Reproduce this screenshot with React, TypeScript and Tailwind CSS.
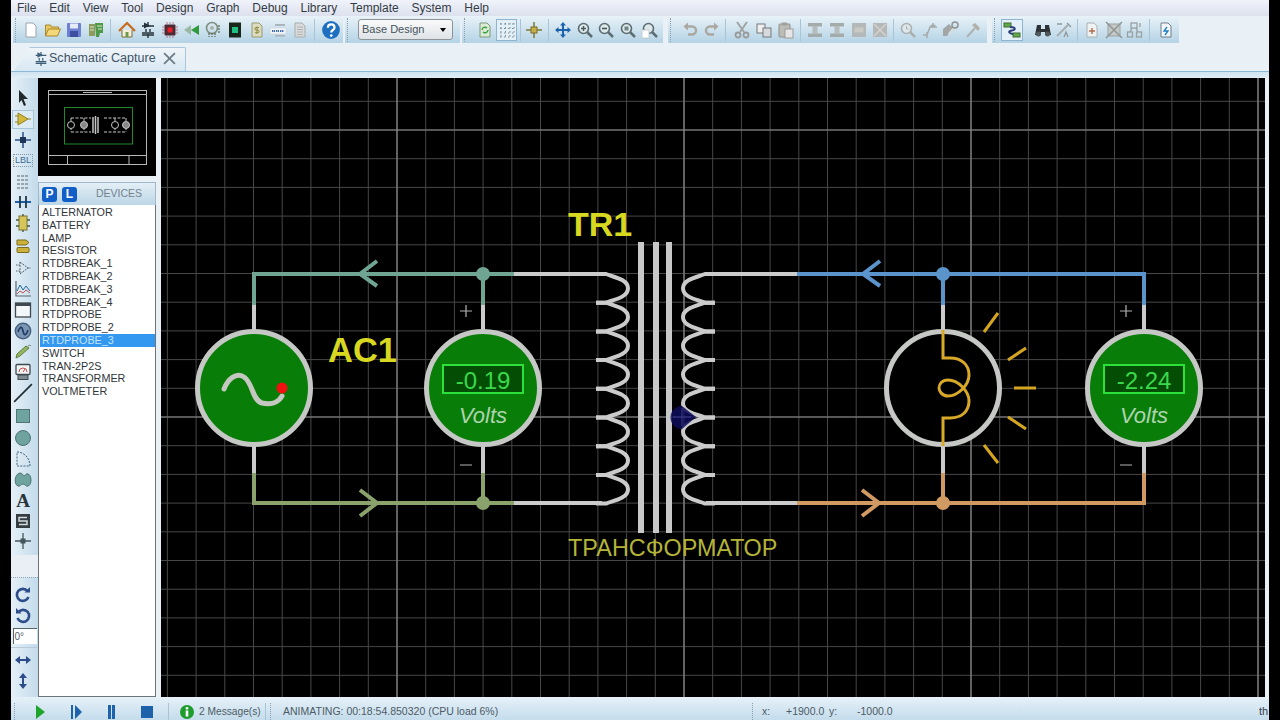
import { ReactNode } from 'react'

const menus = ['File', 'Edit', 'View', 'Tool', 'Design', 'Graph', 'Debug', 'Library', 'Template', 'System', 'Help']
const devices = ['ALTERNATOR', 'BATTERY', 'LAMP', 'RESISTOR', 'RTDBREAK_1', 'RTDBREAK_2', 'RTDBREAK_3', 'RTDBREAK_4', 'RTDPROBE', 'RTDPROBE_2', 'RTDPROBE_3', 'SWITCH', 'TRAN-2P2S', 'TRANSFORMER', 'VOLTMETER']

const Ico = ({ children, size = 18 }: { children: ReactNode; size?: number }) => (
  <svg viewBox="0 0 18 18" width={size} height={size}>
    {children}
  </svg>
)

const Cell = ({ children, active }: { children: ReactNode; active?: boolean }) => (
  <div className={`flex h-[22px] w-[21.7px] shrink-0 items-center justify-center ${active ? 'border border-[#8fb4d0] bg-[#e4f0f8]' : ''}`}>
    {children}
  </div>
)

const Sep = ({ l = 3, r = 5 }: { l?: number; r?: number }) => (
  <div className="h-[22px] w-px shrink-0 bg-[#a9c4d6]" style={{ marginLeft: l, marginRight: r }} />
)

const Grip = () => <div className="ml-[2px] h-[24px] w-0 shrink-0 border-l border-dotted border-[#8aa0b0]" />

const Doc = ({ fill = '#fff', stroke = '#9aa4ac', children }: { fill?: string; stroke?: string; children?: ReactNode }) => (
  <Ico>
    <path d="M4 2h7l3 3v11H4z" fill={fill} stroke={stroke} />
    {children}
  </Ico>
)

const Magnifier = ({ sign, color = '#5c6e72' }: { sign?: ReactNode; color?: string }) => (
  <Ico>
    <path d="M11 11l5 5" stroke={color} strokeWidth="2.5" />
    <circle cx="7.5" cy="7.5" r="5" fill="#dfe8ea" stroke={color} strokeWidth="1.6" />
    {sign}
  </Ico>
)

const GreyBlock = () => (
  <Ico>
    <rect x="2" y="2" width="14" height="3.5" fill="#a3abab" />
    <rect x="2" y="12.5" width="14" height="3.5" fill="#a3abab" />
    <rect x="6.5" y="5" width="5" height="8" fill="#b6bcbc" />
  </Ico>
)

const GreyBox = ({ cross }: { cross?: boolean }) => (
  <Ico>
    <rect x="2" y="2" width="14" height="14" fill="#b4b8b8" />
    {cross ? <path d="M3 3l12 12M15 3L3 15" stroke="#d6d2cc" strokeWidth="1.5" /> : <rect x="4.5" y="6.5" width="9" height="5" fill="#c9c9c6" />}
  </Ico>
)

const Toolbars = () => (
  <div className="flex h-[28px] items-start bg-[#e9f0f6] pl-[2px]">
    <div className="flex h-[27px] w-[330px] items-center bg-gradient-to-b from-[#e8f2f8] to-[#b4d3e5]">
      <Grip />
      <div className="w-[4px]" />
      <Cell><Doc /></Cell>
      <Cell>
        <Ico>
          <path d="M1.5 15V4h5l1 2h7v2" fill="#e8c860" stroke="#a8882c" />
          <path d="M1.5 15l3-7h12l-3 7z" fill="#f3d77a" stroke="#a8882c" />
        </Ico>
      </Cell>
      <Cell>
        <Ico>
          <rect x="2" y="2" width="14" height="14" rx="1" fill="#6c7fd2" />
          <rect x="5" y="2.5" width="8" height="5" fill="#e6eaf8" />
          <rect x="5" y="10" width="8" height="6" fill="#3f4f9f" />
        </Ico>
      </Cell>
      <Cell>
        <Ico>
          <path d="M2 3h6v12H2z" fill="#8c9a5a" />
          <path d="M8 2h8v10h-3l-1 4H9z" fill="#4f9a4a" />
          <path d="M3 6h4M3 9h4M10 5h5M11 8h4" stroke="#dce6c4" />
        </Ico>
      </Cell>
      <Sep />
      <Cell>
        <Ico>
          <path d="M4 9v7h10V9" fill="#f6f0d8" stroke="#7a6a3a" />
          <path d="M1 10l8-8 8 8" fill="none" stroke="#c66a1c" strokeWidth="2.2" />
          <rect x="7.5" y="11" width="3" height="5" fill="#6c9c4a" />
        </Ico>
      </Cell>
      <Cell>
        <Ico>
          <path d="M9 1v5M3 5h12M9 13v4M3 12h12M3 14h12" stroke="#26323a" strokeWidth="1.4" />
          <path d="M5 1.5l6 3-6 3z" fill="#26323a" />
          <path d="M7 8v3M11 8v3" stroke="#26323a" strokeWidth="1.4" />
        </Ico>
      </Cell>
      <Cell>
        <Ico>
          <rect x="3.5" y="3.5" width="11" height="11" rx="1" fill="#4c2a34" />
          <rect x="6.5" y="6.5" width="5" height="5" fill="#e8202c" />
          <path d="M1 6h2M1 9h2M1 12h2M15 6h2M15 9h2M15 12h2M6 1v2M9 1v2M12 1v2M6 15v2M9 15v2M12 15v2" stroke="#b47a84" />
        </Ico>
      </Cell>
      <Cell>
        <Ico>
          <path d="M8 4v10L1 9z" fill="#9cb8a0" />
          <path d="M16 4v10L8 9z" fill="#2f9a3c" />
        </Ico>
      </Cell>
      <Cell>
        <Ico>
          <circle cx="8" cy="7" r="5.5" fill="none" stroke="#7e8e7e" strokeWidth="1.6" />
          <path d="M5 12v4M8 12v4M11 12v4M15 4v9" stroke="#68766a" strokeWidth="1.4" strokeDasharray="2 1" />
          <circle cx="8" cy="7" r="2" fill="#a8b4a8" />
        </Ico>
      </Cell>
      <Cell>
        <Ico>
          <rect x="3" y="1.5" width="12" height="15" fill="#18261c" />
          <rect x="6" y="6" width="6" height="6" fill="#1fc080" />
        </Ico>
      </Cell>
      <Cell>
        <Doc fill="#dcdcc0" stroke="#9a9a70">
          <path d="M11 6.5H8.2a1.2 1.2 0 0 0 0 2.6h1.6a1.2 1.2 0 0 1 0 2.6H7M9 5.5v7.5" fill="none" stroke="#8c8a3c" />
        </Doc>
      </Cell>
      <Cell>
        <Ico>
          <rect x="6" y="3" width="10" height="2" fill="#a9b4bc" />
          <rect x="1" y="7" width="16" height="6" fill="#f2f4f6" stroke="#c3ccd2" strokeWidth="0.5" />
          <path d="M3 10h3M7 10h3M11 10h4" stroke="#3c6ab0" strokeWidth="2" strokeDasharray="1.2 .6" />
          <rect x="6" y="14" width="10" height="1.6" fill="#a9b4bc" />
        </Ico>
      </Cell>
      <Cell>
        <Doc fill="#d9dcda" stroke="#a7acac">
          <path d="M6 6h6M6 8.5h6M6 11h6M6 13.5h6" stroke="#aeb2b0" />
        </Doc>
      </Cell>
      <Sep />
      <Cell>
        <Ico size={20}>
          <circle cx="9" cy="9" r="8" fill="#1f6fc0" />
          <path d="M6.2 7c0-4 6-4 6 0 0 2-3 2-3 4.2" fill="none" stroke="#fff" strokeWidth="2" />
          <circle cx="9.2" cy="14" r="1.2" fill="#fff" />
        </Ico>
      </Cell>
    </div>
    <div className="ml-[2px] flex h-[27px] w-[115px] items-center bg-gradient-to-b from-[#e8f2f8] to-[#b4d3e5]">
      <Grip />
      <div className="ml-[10px] flex h-[21px] w-[95px] items-center justify-between rounded-[3px] border border-[#8c9499] bg-gradient-to-b from-[#fafafa] to-[#dfe3e6] pl-[3px] pr-[6px] text-[11px] text-[#45535c]">
        <span>Base Design</span>
        <span className="h-0 w-0 border-x-[3.5px] border-t-[4px] border-x-transparent border-t-black" />
      </div>
    </div>
    <div className="ml-[2px] flex h-[27px] w-[201px] items-center bg-gradient-to-b from-[#e8f2f8] to-[#b4d3e5]">
      <Grip />
      <div className="w-[9px]" />
      <Cell>
        <Doc fill="#dcead4" stroke="#7c9a78">
          <path d="M6 9a3 3 0 0 1 5-2M12 9a3 3 0 0 1-5 2" fill="none" stroke="#38a044" strokeWidth="1.4" />
        </Doc>
      </Cell>
      <Cell active>
        <Ico>
          <path d="M2 3h14M2 7.5h14M2 12h14M2 16h14M3 2v14M7.5 2v14M12 2v14M16 2v14" stroke="#5f7482" strokeWidth="0.8" strokeDasharray="1.5 2.5" />
        </Ico>
      </Cell>
      <Sep l={3} r={2} />
      <Cell>
        <Ico>
          <path d="M9 1v16M1 9h16" stroke="#7a7a3c" strokeWidth="1.5" />
          <rect x="6" y="6" width="6" height="6" fill="#c4b04a" stroke="#7c6a24" />
        </Ico>
      </Cell>
      <Sep l={3} r={3} />
      <Cell>
        <Ico>
          <path d="M9 1l3 3.5h-2V8h3.5V6l3.5 3-3.5 3v-2H10v3.5h2L9 17l-3-3.5h2V10H4.5v2L1 9l3.5-3v2H8V4.5H6z" fill="#1e62ac" />
        </Ico>
      </Cell>
      <Cell><Magnifier sign={<path d="M5 7.5h5M7.5 5v5" stroke="#45585c" strokeWidth="1.4" />} /></Cell>
      <Cell><Magnifier sign={<path d="M5 7.5h5" stroke="#45585c" strokeWidth="1.6" />} /></Cell>
      <Cell><Magnifier sign={<rect x="5.5" y="5.5" width="4" height="4" fill="#72868a" />} /></Cell>
      <Cell>
        <Magnifier sign={<rect x="1" y="9" width="7" height="8" fill="#fff" stroke="#b8c0c4" strokeWidth="0.7" />} />
      </Cell>
    </div>
    <div className="ml-[5px] flex h-[27px] w-[319px] items-center bg-gradient-to-b from-[#e8f2f8] to-[#b4d3e5]">
      <Grip />
      <div className="w-[8px]" />
      <Cell>
        <Ico>
          <path d="M4 5.5h7a4 4 0 0 1 0 8H7" fill="none" stroke="#aaa8a0" strokeWidth="2.4" />
          <path d="M7 1.5L2.5 5.5 7 9.5z" fill="#aaa8a0" />
        </Ico>
      </Cell>
      <Cell>
        <Ico>
          <path d="M14 5.5H7a4 4 0 0 0 0 8h4" fill="none" stroke="#aaa8a0" strokeWidth="2.4" />
          <path d="M11 1.5l4.5 4-4.5 4z" fill="#aaa8a0" />
        </Ico>
      </Cell>
      <Sep l={3} r={5} />
      <Cell>
        <Ico>
          <path d="M4 1l7 10M14 1L7 11" stroke="#a0a4a4" strokeWidth="2" />
          <circle cx="5" cy="14" r="2.5" fill="none" stroke="#9a9a9a" strokeWidth="1.8" />
          <circle cx="13" cy="14" r="2.5" fill="none" stroke="#9a9a9a" strokeWidth="1.8" />
        </Ico>
      </Cell>
      <Cell>
        <Ico>
          <rect x="2" y="3" width="8" height="9" fill="#eee" stroke="#75787c" />
          <rect x="8" y="7" width="8" height="9" fill="#d7dadc" stroke="#75787c" />
        </Ico>
      </Cell>
      <Cell>
        <Ico>
          <rect x="2" y="3" width="11" height="13" rx="1" fill="#bdbdb8" stroke="#8e8e8c" />
          <rect x="5" y="1.5" width="5" height="3" fill="#a0a09c" />
          <rect x="8" y="8" width="8" height="9" fill="#e6e6e6" stroke="#9c9c9c" />
        </Ico>
      </Cell>
      <Sep l={4} r={3} />
      <Cell><GreyBlock /></Cell>
      <Cell><GreyBlock /></Cell>
      <Cell><GreyBox /></Cell>
      <Cell><GreyBox cross /></Cell>
      <Sep l={2} r={3} />
      <Cell><Magnifier color="#aab0b0" sign={<path d="M7.5 5v3h2" fill="none" stroke="#aab0b0" />} /></Cell>
      <Cell>
        <Ico>
          <path d="M2 14h4l3-8h7M12 2v5M9.5 4.5h5M6 11v6" fill="none" stroke="#a5acac" strokeWidth="1.5" />
        </Ico>
      </Cell>
      <Cell>
        <Ico>
          <path d="M1 8l6-5 4 4-6 8H1z" fill="#a2a6a6" />
          <path d="M7 13l7-8" stroke="#d8dcdc" strokeWidth="2.5" />
          <circle cx="13" cy="4" r="3" fill="none" stroke="#8e9494" strokeWidth="1.5" />
        </Ico>
      </Cell>
      <Cell>
        <Ico>
          <path d="M3 16l8-9" stroke="#aeb2b2" strokeWidth="2" />
          <path d="M8 4l3-2 5 5-2 3z" fill="#b2b0a8" />
        </Ico>
      </Cell>
    </div>
    <div className="ml-[5px] flex h-[27px] w-[187px] items-center bg-gradient-to-b from-[#e8f2f8] to-[#b4d3e5]">
      <Grip />
      <div className="w-[6px]" />
      <Cell active>
        <Ico>
          <rect x="1" y="2" width="7" height="4" fill="#62a84c" stroke="#3c6a30" />
          <rect x="10" y="12" width="7" height="4" fill="#62a84c" stroke="#3c6a30" />
          <path d="M7 6c6 0 6 3 2 3.5S5 12 10 13" fill="none" stroke="#2b3f78" strokeWidth="2" />
        </Ico>
      </Cell>
      <div className="w-[9px]" />
      <Cell>
        <Ico>
          <path d="M3 4h4v4h4V4h4l2 10h-6v-3H7v3H1z" fill="#2d3236" />
          <circle cx="4.5" cy="13" r="2.5" fill="#50585c" />
          <circle cx="13.5" cy="13" r="2.5" fill="#50585c" />
        </Ico>
      </Cell>
      <Cell>
        <Ico>
          <path d="M2 15L13 4" stroke="#a6aeb0" strokeWidth="2" />
          <path d="M12 2l4 4M2 3h5M13 16l-2-5-2 5" fill="none" stroke="#8f999c" strokeWidth="1.3" />
        </Ico>
      </Cell>
      <Sep l={2} r={3} />
      <Cell>
        <Doc fill="#eef2f2" stroke="#a9b2b4">
          <path d="M9 7v6M6 10h6" stroke="#b0704c" strokeWidth="1.4" />
        </Doc>
      </Cell>
      <Cell>
        <Ico>
          <rect x="3" y="3" width="12" height="12" fill="#c4c8c6" stroke="#9ca2a0" />
          <path d="M1 1l16 16M17 1L1 17" stroke="#8f9694" strokeWidth="1.5" />
        </Ico>
      </Cell>
      <Cell>
        <Ico>
          <rect x="5" y="2" width="6" height="5" fill="none" stroke="#98a0a2" strokeWidth="1.3" />
          <rect x="1.5" y="11" width="5" height="5" fill="none" stroke="#98a0a2" strokeWidth="1.3" />
          <rect x="10.5" y="11" width="5" height="5" fill="none" stroke="#98a0a2" strokeWidth="1.3" />
          <path d="M6 7l-2 4M10 7l2 4M14 2v4" stroke="#98a0a2" strokeWidth="1.3" />
        </Ico>
      </Cell>
      <Sep l={3} r={5} />
      <Cell>
        <Doc fill="#f3f6f8" stroke="#6e7e88">
          <path d="M10 6l-3 4h4l-3 4" fill="none" stroke="#1f7fc0" strokeWidth="1.3" />
        </Doc>
      </Cell>
    </div>
  </div>
)

const TabStrip = () => (
  <div className="flex h-[27px] items-end bg-[#e9f0f6] pl-[3px]">
    <div className="flex h-[24px] w-[172px] items-center rounded-tr-[2px] border-r border-t border-[#a9c6da] bg-gradient-to-b from-[#f0f5f9] to-[#d8e8f3] pb-[2px] pl-[19px] [clip-path:polygon(16px_0,100%_0,100%_100%,0_100%)]">
      <Ico size={16}>
        <path d="M9 1v5M3 5h12M9 13v4M3 12h12M3 14h12M7 8v3M11 8v3" stroke="#3f5f78" strokeWidth="1.4" />
        <path d="M5 1.5l6 3-6 3z" fill="#3f5f78" />
      </Ico>
      <span className="w-[106px] shrink-0 whitespace-nowrap text-[12.5px] tracking-[0.02px] text-[#3f5266]">Schematic Capture</span>
      <svg viewBox="0 0 12 12" width="13" height="13" className="ml-[8px]">
        <path d="M1 1l10 10M11 1L1 11" stroke="#6f7d88" strokeWidth="1.7" />
      </svg>
    </div>
  </div>
)

const Side = ({ children, h = 20.8 }: { children: ReactNode; h?: number }) => (
  <div className="flex w-[24px] shrink-0 items-center justify-center" style={{ height: h }}>
    {children}
  </div>
)

const LeftTools = () => (
  <div className="flex w-[27px] shrink-0 flex-col bg-gradient-to-r from-[#e6f0f7] to-[#c3dbeb] pt-[10px]">
    <Side>
      <Ico>
        <path d="M5 1l9 9H9.5l2.5 6-2 1-2.5-6L5 14z" fill="#20282c" />
      </Ico>
    </Side>
    <Side>
      <div className="flex h-[19px] w-[22px] items-center justify-center border border-[#a8c4d8] bg-[#dcebf4]">
        <Ico>
          <path d="M4 3v12l10-6z" fill="#d4b83c" stroke="#90801f" />
          <path d="M1 6h3M1 12h3M14 9h3" stroke="#90801f" />
        </Ico>
      </div>
    </Side>
    <Side>
      <Ico>
        <path d="M9 1v16M1 9h16" stroke="#2c4e88" strokeWidth="1.5" />
        <rect x="6" y="6" width="6" height="6" fill="#1e3458" />
      </Ico>
    </Side>
    <Side>
      <span className="border border-dotted border-[#7e97a8] px-px text-[9px] leading-[11px] text-[#3e6a94]">LBL</span>
    </Side>
    <Side>
      <Ico>
        <path d="M3 3h12M3 7h12M3 11h12M3 15h12" stroke="#5a6468" strokeWidth="1.2" strokeDasharray="3 1" />
      </Ico>
    </Side>
    <Side>
      <Ico>
        <path d="M1 9h16" stroke="#1d60b4" strokeWidth="2" />
        <path d="M6 3v12M12 3v12" stroke="#203848" strokeWidth="1.8" />
      </Ico>
    </Side>
    <Side>
      <Ico>
        <rect x="5" y="2" width="8" height="14" fill="#d6c558" stroke="#7c7430" />
        <path d="M2 6h3M2 12h3M13 6h3M13 12h3M9 0v2M9 16v2" stroke="#475a40" strokeWidth="1.4" />
      </Ico>
    </Side>
    <Side h={24}>
      <Ico>
        <path d="M3 3h9l3 2.5L12 8H3z" fill="#cdb23a" stroke="#7c6a20" />
        <rect x="3" y="10.5" width="12" height="5" rx="1" fill="#cdb23a" stroke="#7c6a20" />
      </Ico>
    </Side>
    <Side h={21}>
      <Ico>
        <path d="M6 3v12l8-6z" fill="none" stroke="#54646c" strokeDasharray="2 1" />
        <path d="M2 6h4M2 12h4M14 9h3" stroke="#54646c" strokeDasharray="1.5 1" />
      </Ico>
    </Side>
    <Side>
      <Ico>
        <path d="M2 1v15h15" fill="none" stroke="#5a6670" strokeWidth="1.2" />
        <path d="M3 11l3-6 3 5 3-4 4 5" fill="none" stroke="#1f6a9c" />
        <path d="M3 14l3-3 3 2 3-3 4 3" fill="none" stroke="#c25454" />
      </Ico>
    </Side>
    <Side>
      <Ico>
        <rect x="1.5" y="2" width="15" height="14" fill="#f4f7f9" stroke="#3f484e" strokeWidth="1.3" />
        <rect x="1.5" y="2" width="15" height="3" fill="#3f484e" />
      </Ico>
    </Side>
    <Side>
      <Ico>
        <circle cx="9" cy="9" r="7.7" fill="#7c95b4" stroke="#48617e" strokeWidth="1.4" />
        <path d="M4 10c2-6 4-6 5-1s3 5 5-1" fill="none" stroke="#1f3a62" strokeWidth="1.6" />
      </Ico>
    </Side>
    <Side>
      <Ico>
        <path d="M2 16l1-4L12 4l3 2-9 8z" fill="#96b860" stroke="#5b7b3a" />
        <path d="M14 4c1-1 2-1 3 0" fill="none" stroke="#6e7a6e" />
      </Ico>
    </Side>
    <Side>
      <Ico>
        <rect x="2" y="1.5" width="14" height="10" rx="1" fill="#f2f4f4" stroke="#3f4a50" strokeWidth="1.3" />
        <path d="M5 9a4 4 0 0 1 8 0M9 9l2-3" fill="none" stroke="#c25050" />
        <rect x="4" y="12" width="10" height="4.5" fill="#7e8a90" stroke="#3f4a50" />
      </Ico>
    </Side>
    <Side h={21}>
      <Ico size={20}>
        <path d="M1 17L17 1" stroke="#1e2a30" strokeWidth="1.4" />
      </Ico>
    </Side>
    <Side h={24}>
      <div className="h-[14px] w-[14px] border border-[#4f7474] bg-[#6fa3a0]" />
    </Side>
    <Side h={21}>
      <div className="h-[16px] w-[16px] rounded-full border border-[#4f7474] bg-[#6fa3a0]" />
    </Side>
    <Side h={21}>
      <Ico>
        <path d="M3 2c7 0 13 6 13 14H3z" fill="none" stroke="#44607a" strokeDasharray="2 1.2" />
      </Ico>
    </Side>
    <Side h={20}>
      <Ico>
        <path d="M6 2c3 0 3 3 4 3s2-3 4-2c4 1 4 11 0 12-2 1-3-2-5-2s-3 3-5 2C0 14 0 3 6 2z" fill="#6fa3a0" stroke="#4f7474" />
      </Ico>
    </Side>
    <Side h={21}>
      <span className="font-['Liberation_Serif',serif] text-[19px] font-bold leading-none text-[#28343a]">A</span>
    </Side>
    <Side h={20}>
      <Ico>
        <rect x="2" y="2" width="14" height="14" fill="#333d42" />
        <path d="M13 5.5H5V9h8v3.5H5" fill="none" stroke="#d4dade" strokeWidth="1.5" />
      </Ico>
    </Side>
    <Side h={21}>
      <Ico>
        <path d="M9 1v16M1 9h16" stroke="#43565c" strokeWidth="1.3" />
        <rect x="6.5" y="6.5" width="5" height="5" fill="#43565c" />
      </Ico>
    </Side>
    <div className="mt-[3px] h-[22px] bg-[#e9eff4]" />
    <div className="border-t border-dotted border-[#8fa4b4]" />
    <Side h={7}>{null}</Side>
    <Side>
      <Ico>
        <path d="M14.5 11a6 6 0 1 1-1-6" fill="none" stroke="#2c4c8a" strokeWidth="2.6" />
        <path d="M10.5 6.5H16V1z" fill="#2c4c8a" />
      </Ico>
    </Side>
    <Side>
      <Ico>
        <path d="M3.5 11a6 6 0 1 0 1-6" fill="none" stroke="#2c4c8a" strokeWidth="2.6" />
        <path d="M7.5 6.5H2V1z" fill="#2c4c8a" />
      </Ico>
    </Side>
    <div className="mx-auto mt-[2px] flex h-[16px] w-[24px] items-center border-l border-t border-[#59636a] bg-white pl-[1px] text-[10px] text-[#55626a]">0°</div>
    <div className="mt-[3px] h-px bg-[#b8cbd8]" />
    <Side h={24}>
      <Ico>
        <path d="M1 9l5-4v8zM17 9l-5-4v8z" fill="#2c4c8a" />
        <path d="M5 9h8" stroke="#2c4c8a" strokeWidth="2" />
      </Ico>
    </Side>
    <Side h={18}>
      <Ico>
        <path d="M9 1L5 6h8zM9 17l-4-5h8z" fill="#2c4c8a" />
        <path d="M9 5v8" stroke="#2c4c8a" strokeWidth="2" />
      </Ico>
    </Side>
  </div>
)

const Overview = () => (
  <svg viewBox="38 78 118 98" className="h-[98px] w-[118px] shrink-0 bg-black">
    <g fill="none" stroke="#b8b8b8">
      <rect x="48.5" y="90.5" width="98" height="74" />
      <path d="M48 94.5h99M48 155.5h99M83 92.5h29" />
      <rect x="67.5" y="155.5" width="61.5" height="9" />
    </g>
    <rect x="64.5" y="107.5" width="68" height="36.5" fill="none" stroke="#1f8a2c" />
    <g fill="none" stroke="#c4c4c4">
      <path d="M71 118h20M71 132h20M104 118h22M104 132h22M71 118v14M126 118v14M84 118v14M115 118v14" strokeDasharray="3 1.5" />
      <circle cx="71" cy="125" r="3.5" fill="#000" />
      <circle cx="84" cy="125" r="3.5" fill="#888" />
      <circle cx="115" cy="125" r="3.5" fill="#000" />
      <circle cx="126" cy="125" r="3.5" fill="#888" />
      <path d="M93 117v16M95.5 116v18M98 117v16" strokeWidth="1.5" />
    </g>
  </svg>
)

const DevicePanel = () => (
  <div className="flex w-[118px] shrink-0 flex-col">
    <Overview />
    <div className="mt-[6px] flex h-[23px] shrink-0 items-center border-x border-t border-[#9fb7c8] bg-gradient-to-b from-[#e4eff6] to-[#bcd6e6] pl-[3px]">
      <span className="flex h-[15px] w-[15px] items-center justify-center rounded-[3px] bg-[#1160c8] text-[12px] font-bold text-white">P</span>
      <span className="ml-[5px] flex h-[15px] w-[15px] items-center justify-center rounded-[3px] bg-[#1160c8] text-[12px] font-bold text-white">L</span>
      <span className="ml-[19px] text-[10.5px] text-[#73828e]">DEVICES</span>
    </div>
    <div className="flex-1 border-x border-b border-[#6f7478] bg-white pl-px pt-px">
      {devices.map((d) => (
        <div
          key={d}
          className={`h-[12.8px] whitespace-nowrap pl-[2px] text-[10.8px] leading-[12.8px] ${d === 'RTDPROBE_3' ? 'bg-[#3399f0] text-[#c4e2fb]' : 'text-[#30353a]'}`}
        >
          {d}
        </div>
      ))}
    </div>
  </div>
)

const minorX = Array.from({ length: 39 }, (_, i) => 167.4 + i * 28.7)
const minorY = Array.from({ length: 22 }, (_, i) => 101.3 + i * 28.7)
const majorX = [397, 684, 971, 1258]
const majorY = [130, 417]
const coilY = Array.from({ length: 8 }, (_, i) => 274 + i * 28.7)

const Meter = ({ cx, value }: { cx: number; value: string }) => (
  <g>
    <circle cx={cx} cy={388} r={56.5} fill="#087d08" stroke="#c6c8c6" strokeWidth="5" />
    <rect x={cx - 40} y={365} width={80} height={28} fill="#034d05" stroke="#2ee03a" strokeWidth="2" />
    <text x={cx} y={389} textAnchor="middle" className="fill-[#3ad84a] text-[24px]">{value}</text>
    <text x={cx} y={423} textAnchor="middle" className="fill-[#aed4ae] text-[22px] italic">Volts</text>
  </g>
)

const Canvas = () => (
  <svg viewBox="161 78 1104 619" className="h-full w-[1104px] shrink-0 bg-black">
    <g stroke="#474747" strokeWidth="1">
      {minorX.map((x) => <line key={x} x1={x} x2={x} y1={78} y2={697} />)}
      {minorY.map((y) => <line key={y} x1={161} x2={1265} y1={y} y2={y} />)}
    </g>
    <g stroke="#8c8c8c" strokeWidth="1.2">
      {majorX.map((x) => <line key={x} x1={x} x2={x} y1={78} y2={697} />)}
      {majorY.map((y) => <line key={y} x1={161} x2={1265} y1={y} y2={y} />)}
    </g>

    {/* grey stubs and leads */}
    <g fill="none" stroke="#cbcbcb" strokeWidth="4">
      <path d="M254 304v28M254 444v30M483 304v28M483 444v30M943 304v28M943 444v30M1144 304v28M1144 444v30" />
      <path d="M514 274h88M514 503h88M706 274h91M706 503h91" />
    </g>

    {/* left loop */}
    <g fill="none" stroke="#6fa592" strokeWidth="4">
      <path d="M254 305v-31h260M483 274v31M377 261l-17 13 17 12" />
    </g>
    <circle cx="483" cy="274" r="7" fill="#6fa592" />
    <g fill="none" stroke="#8aa36c" strokeWidth="4">
      <path d="M254 473v30h260M483 503v-30M360 490l17 13-17 13" />
    </g>
    <circle cx="483" cy="503" r="7" fill="#8aa36c" />

    {/* right loop */}
    <g fill="none" stroke="#5b93cb" strokeWidth="4">
      <path d="M797 274h347v31M943 274v31M880 261l-17 13 17 12" />
    </g>
    <circle cx="943" cy="274" r="7" fill="#5b93cb" />
    <g fill="none" stroke="#d09a62" strokeWidth="4">
      <path d="M797 503h347v-30M943 503v-30M862 490l17 13-17 13" />
    </g>
    <circle cx="943" cy="503" r="7" fill="#d09a62" />

    {/* source */}
    <circle cx="254" cy="388" r="56.5" fill="#087d08" stroke="#c6c8c6" strokeWidth="5" />
    <path d="M224 389c4-10 12-17 20-12 9 6 8 23 18 26 8 2 16 0 20-7" fill="none" stroke="#c4c8c0" strokeWidth="5" strokeLinecap="round" />
    <circle cx="282" cy="388" r="5.5" fill="#f01010" />
    <text x="328" y="362" className="fill-[#d8d820] text-[34.5px] font-bold">AC1</text>

    <Meter cx={483} value="-0.19" />
    <Meter cx={1144} value="-2.24" />
    <g stroke="#b4b4b4" strokeWidth="1.2">
      <path d="M460 311h12M466 305v12M460 465h12M1120 311h12M1126 305v12M1120 465h12" />
    </g>

    {/* transformer */}
    <text x="568" y="236" className="fill-[#d8d820] text-[34px] font-bold">TR1</text>
    <g stroke="#c8c8c8" strokeWidth="6">
      <path d="M641 242v291M656 242v291M669 242v291" />
    </g>
    <g fill="none" stroke="#cbcbcb" strokeWidth="4">
      {coilY.map((y) => (
        <g key={y}>
          <path d={`M596 ${y}H606C613 ${y + 3} 628 ${y + 5} 628 ${y + 14.35}C628 ${y + 23.7} 613 ${y + 25.7} 606 ${y + 28.7}H596`} />
          <path d={`M715 ${y}H705C698 ${y + 3} 683 ${y + 5} 683 ${y + 14.35}C683 ${y + 23.7} 698 ${y + 25.7} 705 ${y + 28.7}H715`} />
        </g>
      ))}
    </g>
    <path d="M682 406l14 11-14 12a11.5 11.5 0 0 1 0-23z" fill="#0c0c5a" opacity="0.85" />
    <path d="M673 417h18M682 408v18" stroke="#3a3a8a" />
    <text x="568" y="556" className="fill-[#b4b438] text-[23.4px]">ТРАНСФОРМАТОР</text>

    {/* lamp */}
    <circle cx="943" cy="388" r="56.5" fill="#000" stroke="#c6c8c6" strokeWidth="5" />
    <g fill="none" stroke="#d8a828" strokeWidth="3">
      <path d="M943 330v28h7c12 0 19 7 19 17s-11 21-21 21c-6 0-9-5-9-8 0-4 3-8 9-8 10 0 21 11 21 21s-7 17-19 17h-7v28" />
    </g>
    <g stroke="#d4a520" strokeWidth="3">
      <path d="M984 332l14-19M1008 360l18-12M1014 388h22M1008 417l18 12M984 445l14 18" />
    </g>
  </svg>
)

const StatusBar = () => (
  <div className="flex h-[23px] shrink-0 items-center bg-gradient-to-b from-[#e6f1f8] to-[#c4dcec] pt-[6px] text-[10.5px] text-[#4d5b65]">
    <div className="ml-[3px] h-[17px] w-0 border-l border-dotted border-[#8aa0b0]" />
    <svg viewBox="0 0 130 18" width="130" height="18" className="ml-[21px] shrink-0">
      <path d="M0 2l9 7-9 7z" fill="#1fa52c" />
      <path d="M36 2v14" stroke="#1e62ac" strokeWidth="2" />
      <path d="M39 2l7 7-7 7z" fill="#1e62ac" />
      <path d="M73.5 2v14M77.5 2v14" stroke="#1e62ac" strokeWidth="3" />
      <rect x="105" y="3" width="12" height="12" fill="#1e62ac" />
    </svg>
    <div className="ml-[2px] h-[17px] w-px bg-[#a9c4d6]" />
    <svg viewBox="0 0 14 14" width="14" height="14" className="ml-[11px] shrink-0">
      <circle cx="7" cy="7" r="7" fill="#1f9a2c" />
      <rect x="5.7" y="5.5" width="2.6" height="6" fill="#fff" />
      <rect x="5.7" y="2.2" width="2.6" height="2.2" fill="#fff" />
    </svg>
    <span className="ml-[5px] w-[66px] whitespace-nowrap text-[10.2px]">2 Message(s)</span>
    <div className="h-[17px] w-px bg-[#a9c4d6]" />
    <div className="ml-[4px] h-[17px] w-0 border-l border-dotted border-[#8aa0b0]" />
    <span className="ml-[12px] w-[469px] whitespace-nowrap">ANIMATING: 00:18:54.850320 (CPU load 6%)</span>
    <div className="h-[17px] w-0 border-l border-dotted border-[#8aa0b0]" />
    <span className="ml-[9px] w-[24px]">x:</span>
    <span className="w-[43px]">+1900.0</span>
    <span className="w-[28px]">y:</span>
    <span className="w-[402px]">-1000.0</span>
    <span className="text-[11px] text-[#36424c]">th</span>
  </div>
)

export default function App() {
  return (
    <div className="flex h-[720px] w-[1280px] overflow-hidden bg-black px-[11px] font-['Liberation_Sans',sans-serif]">
      <div className="flex w-[1258px] flex-col bg-[#e9f0f6]">
        <div className="flex h-[16px] shrink-0 items-center gap-[12.8px] bg-gradient-to-b from-[#f0f3fa] to-[#dde1ee] pl-[6px] text-[12px] text-[#333c44]">
          {menus.map((m) => (
            <span key={m}>{m}</span>
          ))}
        </div>
        <Toolbars />
        <TabStrip />
        <div className="h-[7px] shrink-0 border-t border-[#8db9d6] bg-gradient-to-b from-[#cfe3f0] to-[#e2eef6]" />
        <div className="flex min-h-0 flex-1">
          <LeftTools />
          <DevicePanel />
          <div className="w-[5px] shrink-0" />
          <Canvas />
        </div>
        <StatusBar />
      </div>
    </div>
  )
}
